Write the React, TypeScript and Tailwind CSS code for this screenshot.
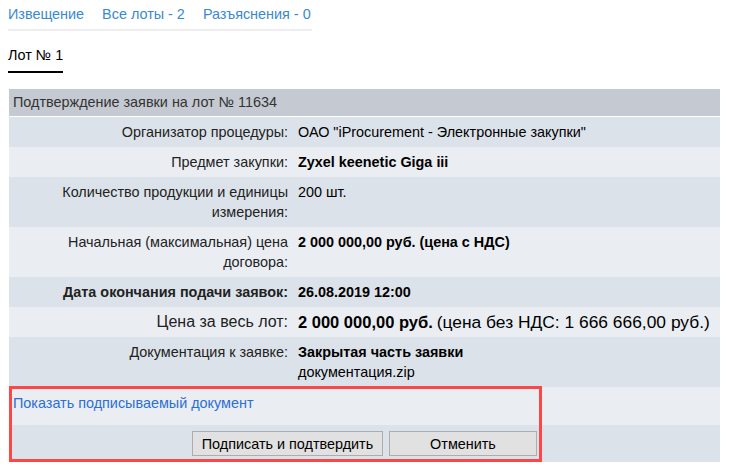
import React from "react";

interface Row {
  label: React.ReactNode;
  value: React.ReactNode;
  tone: "dark" | "light";
  big?: boolean;
}

const tabs = ["Извещение", "Все лоты - 2", "Разъяснения - 0"];

const rows: Row[] = [
  {
    label: "Организатор процедуры:",
    value: 'ОАО "iProcurement - Электронные закупки"',
    tone: "dark",
  },
  {
    label: "Предмет закупки:",
    value: <b>Zyxel keenetic Giga iii</b>,
    tone: "light",
  },
  {
    label: "Количество продукции и единицы измерения:",
    value: "200 шт.",
    tone: "dark",
  },
  {
    label: "Начальная (максимальная) цена договора:",
    value: <b>2 000 000,00 руб. (цена с НДС)</b>,
    tone: "light",
  },
  {
    label: <b>Дата окончания подачи заявок:</b>,
    value: <b>26.08.2019 12:00</b>,
    tone: "dark",
  },
  {
    label: <span className="text-[16px]">Цена за весь лот:</span>,
    value: (
      <span className="whitespace-nowrap">
        <b className="text-[16.5px]">2 000 000,00 руб.</b>{" "}
        <span className="text-[17.4px]">(цена без НДС: 1 666 666,00 руб.)</span>
      </span>
    ),
    tone: "light",
    big: true,
  },
  {
    label: "Документация к заявке:",
    value: (
      <>
        <b>Закрытая часть заявки</b>
        <br />
        документация.zip
      </>
    ),
    tone: "dark",
  },
];

export default function App() {
  return (
    <div className="w-[729px] h-[472px] bg-white overflow-hidden font-['Liberation_Sans',Arial,sans-serif] text-[14.4px] leading-[20px] text-[#222]">
      {/* Top tabs */}
      <div className="pl-[8px]">
        <div className="w-[304px] flex gap-[18px] pt-[4px] pb-[5px] border-b-2 border-[#eeeeee] whitespace-nowrap">
          {tabs.map((t) => (
            <a key={t} href="#" className="shrink-0 text-[#3a89cf]">
              {t}
            </a>
          ))}
        </div>
        <div className="mt-[14px] w-[55px] pb-[6px] border-b-2 border-black text-black whitespace-nowrap">
          Лот № 1
        </div>
      </div>

      {/* Confirmation table */}
      <div className="relative ml-[9px] mt-[16px] w-[711px]">
        <div className="h-[28px] pt-[3px] pl-[4px] bg-[#c5cad2] border-b border-white text-[#333]">
          Подтверждение заявки на лот № 11634
        </div>
        {rows.map((r, i) => (
          <div
            key={i}
            className={`grid grid-cols-[283px_1fr] py-[5px] ${
              r.tone === "dark" ? "bg-[#dce2e9]" : "bg-[#eaeef2]"
            } ${r.big ? "h-[30px] overflow-hidden" : ""}`}
          >
            <div className="text-right pr-[4px] pl-[48px]">{r.label}</div>
            <div className="pl-[6px] text-black">{r.value}</div>
          </div>
        ))}
        <div className="h-[38px] pt-[6px] pl-[4px] bg-[#eaeef2]">
          <a href="#" className="text-[#2a6fd6]">
            Показать подписываемый документ
          </a>
        </div>
        <div className="h-[37px] pt-[6px] flex justify-center gap-[6px] bg-[#dce2e9]">
          <button className="w-[191px] h-[25px] bg-[#e1e1e1] border border-[#adadad] text-black whitespace-nowrap">
            Подписать и подтвердить
          </button>
          <button className="w-[148px] h-[25px] bg-[#e1e1e1] border border-[#adadad] text-black">
            Отменить
          </button>
        </div>

        {/* Highlight frame */}
        <div className="absolute left-0 top-[297px] w-[533px] h-[76px] border-[3px] border-[#fd4646] pointer-events-none" />
      </div>
    </div>
  );
}
